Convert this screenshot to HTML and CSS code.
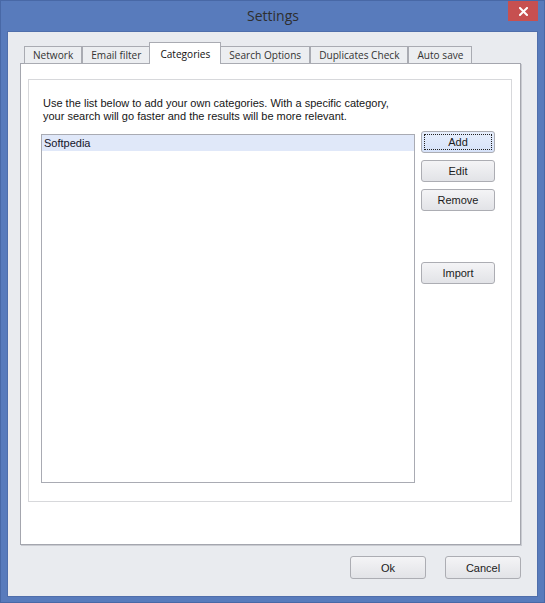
FILE: index.html
```html
<!DOCTYPE html>
<html>
<head>
<meta charset="utf-8">
<title>Settings</title>
<link rel="stylesheet" href="styles.css">
</head>
<body>
<div class="window">
  <div class="titlebar">
    <div class="title">Settings</div>
    <button class="close" aria-label="Close">
      <svg width="9" height="9" viewBox="0 0 9 9"><path d="M1 1L8 8M8 1L1 8" stroke="#fff" stroke-width="2" stroke-linecap="square"/></svg>
    </button>
  </div>
  <div class="client">
    <div class="tabs">
      <div class="tab">Network</div>
      <div class="tab">Email filter</div>
      <div class="tab active">Categories</div>
      <div class="tab">Search Options</div>
      <div class="tab">Duplicates Check</div>
      <div class="tab">Auto save</div>
    </div>
    <div class="panel">
      <div class="group">
        <p class="hint">Use the list below to add your own categories. With a specific category,<br>your search will go faster and the results will be more relevant.</p>
        <div class="row">
          <ul class="listbox">
            <li class="item selected">Softpedia</li>
          </ul>
          <div class="actions">
            <button class="btn focused">Add</button>
            <button class="btn">Edit</button>
            <button class="btn">Remove</button>
            <button class="btn import">Import</button>
          </div>
        </div>
      </div>
    </div>
    <div class="footer">
      <button class="btn big">Ok</button>
      <button class="btn big">Cancel</button>
    </div>
  </div>
</div>
</body>
</html>
```
FILE: styles.css
```css
* { box-sizing: border-box; }
html, body { margin: 0; padding: 0; }
body {
  width: 545px;
  height: 603px;
  overflow: hidden;
  font-family: "Liberation Sans", Arial, sans-serif;
  font-size: 11px;
  color: #1b1b1b;
}
.window {
  width: 545px;
  height: 603px;
  background: #587bbc;
  box-shadow: inset 0 0 0 1px #4868a6;
  display: flex;
  flex-direction: column;
  padding: 0 8px 7px 8px;
}
.titlebar {
  height: 32px;
  flex: none;
  display: grid;
  grid-template-columns: 1fr auto 1fr;
  margin-right: -1px;
}
.title {
  grid-column: 2;
  font-family: "Open Sans", "Noto Sans", sans-serif;
  font-size: 14px;
  line-height: 32px;
  color: #2e2e2e;
}
.close {
  grid-column: 3;
  justify-self: end;
  align-self: start;
  margin-top: 1px;
  width: 30px;
  height: 20px;
  border: 0;
  padding: 0;
  background: #c75050;
  display: flex;
  align-items: center;
  justify-content: center;
}
.client {
  flex: 1;
  background: #e9ebef;
  box-shadow: 0 0 0 1px #4f6eab;
  padding: 10px 16px 0 12px;
  display: flex;
  flex-direction: column;
}
.tabs {
  display: flex;
  align-items: flex-end;
  padding-left: 4px;
  margin-bottom: -1px;
  position: relative;
  z-index: 1;
}
.tab {
  font-family: "Open Sans", "Noto Sans", sans-serif;
  font-size: 10.1px;
  color: #333;
  height: 18px;
  line-height: 16px;
  padding: 0 8px;
  border: 1px solid #a9abb2;
  background: #eceef1;
  margin-right: 0;
  white-space: nowrap;
}
.tab.active {
  height: 22px;
  padding: 3px 10px 0 10px;
  margin: 0 -1px 0 -1px;
  background: #fff;
  border-bottom: 0;
  color: #111;
  position: relative;
}
.panel {
  height: 482px;
  flex: none;
  background: #fff;
  border: 1px solid #a4a6ae;
  box-shadow: 1px 1px 0 #c9cbd1;
  padding: 15px 8px 42px 7px;
}
.group {
  height: 423px;
  border: 1px solid #d7d8db;
  padding: 17px 16px 18px 12px;
  display: flex;
  flex-direction: column;
}
.hint {
  margin: 0 0 8px 0;
  padding-left: 2px;
  line-height: 13px;
  color: #161616;
  white-space: nowrap;
}
.row {
  flex: 1;
  display: flex;
  gap: 6px;
  min-height: 0;
}
.listbox {
  flex: 1;
  margin: 3px 0 0 0;
  padding: 0;
  list-style: none;
  border: 1px solid #a9abb3;
  background: #fff;
}
.item {
  height: 16px;
  line-height: 16px;
  padding-left: 2px;
  color: #14142a;
}
.item.selected {
  background: #e0e8f9;
}
.actions {
  width: 74px;
  display: flex;
  flex-direction: column;
  gap: 7px;
}
.btn {
  font-family: "Liberation Sans", Arial, sans-serif;
  font-size: 11px;
  color: #1b1b1b;
  height: 22px;
  padding: 0;
  border: 1px solid #acadb3;
  border-radius: 3px;
  background: linear-gradient(#f4f4f6, #e2e3e7);
}
.btn.focused {
  background: linear-gradient(#e6eefc, #d6e2f9);
  outline: 1px dotted #222;
  outline-offset: -4px;
}
.btn.import {
  margin-top: 44px;
}
.footer {
  display: flex;
  justify-content: flex-end;
  gap: 19px;
  margin-top: 11px;
}
.btn.big {
  width: 76px;
  height: 23px;
}
```
